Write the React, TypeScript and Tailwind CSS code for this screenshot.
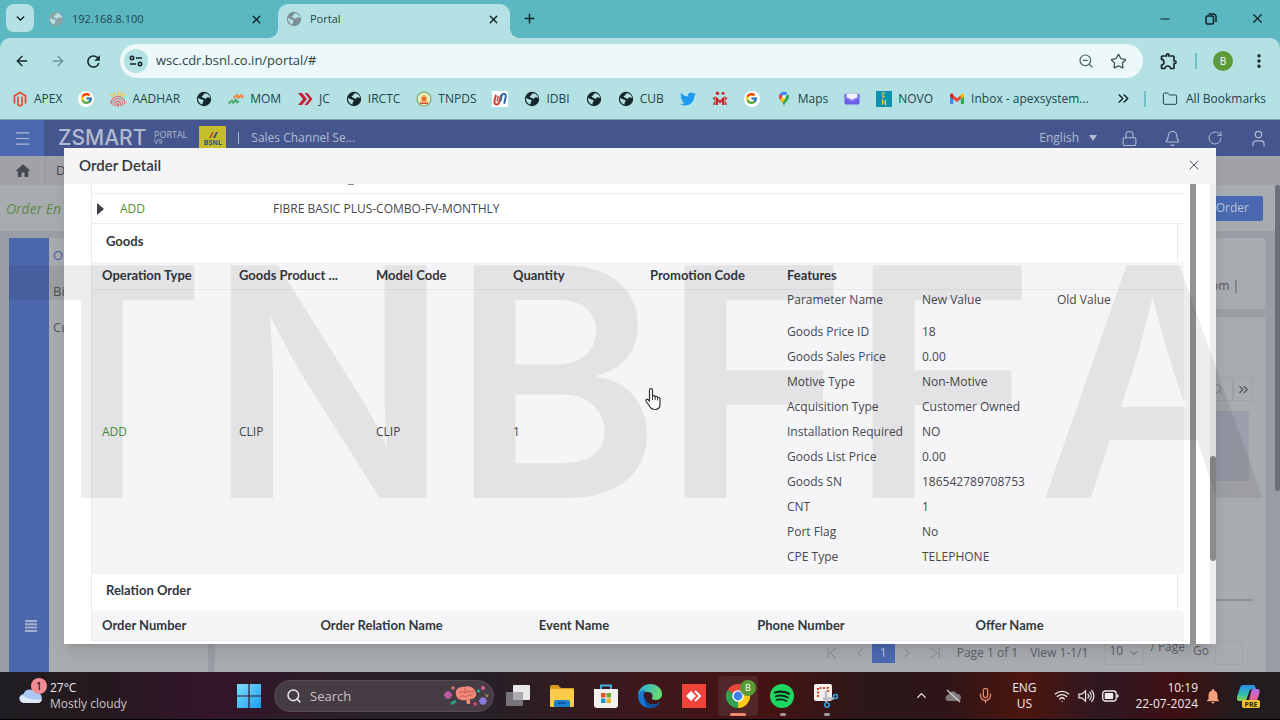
import { useState } from 'react';
import type { ReactNode } from 'react';
import {
  ArrowLeft, ArrowRight, Bell, ChevronDown, ChevronLeft, ChevronRight, ChevronUp, ChevronsRight, Folder, Lock,
  Menu, Mic, Minus, MoreVertical, Plus, RotateCw, Search, Star, User, Wifi, X, ZoomOut,
} from 'lucide-react';
import { FaTwitter } from 'react-icons/fa';
import { FcGoogle } from 'react-icons/fc';
import { MdHome, MdNotifications, MdOutlineExtension, MdRefresh } from 'react-icons/md';

const FEATURES = [
  ['Goods Price ID', '18'],
  ['Goods Sales Price', '0.00'],
  ['Motive Type', 'Non-Motive'],
  ['Acquisition Type', 'Customer Owned'],
  ['Installation Required', 'NO'],
  ['Goods List Price', '0.00'],
  ['Goods SN', '186542789708753'],
  ['CNT', '1'],
  ['Port Flag', 'No'],
  ['CPE Type', 'TELEPHONE'],
];

const GOODS_COLUMNS = ['Operation Type', 'Goods Product ...', 'Model Code', 'Quantity', 'Promotion Code'];
const RELATION_COLUMNS = ['Order Number', 'Order Relation Name', 'Event Name', 'Phone Number', 'Offer Name'];

function Globe({ className = 'text-[#17262b]' }: { className?: string }) {
  return (
    <svg viewBox="0 0 16 16" className={`size-4 shrink-0 ${className}`}>
      <circle cx="8" cy="8" r="7.2" fill="currentColor" />
      <path d="M9 2.200C7.500 2.800 7.800 4.200 6.500 4.800 5.200 5.400 5.600 6.500 6.800 6.500 8.300 6.500 8 7.800 9.300 7.800s1-1.400 2.400-1.500 2 .6 2.600 1.200C14.200 4.800 12 2.300 9 2.200z" fill="#b4e2e4" />
      <path d="M1.900 7.300c1.900-.1 3 1.400 4.600 1.500 1.300.1 1.600 1 .6 1.900-.9.800.1 1.600-.8 2.900C3.700 12.900 1.900 10.500 1.900 7.300z" fill="#b4e2e4" />
    </svg>
  );
}

function GoogleBadge() {
  return <span className="flex size-4 shrink-0 items-center justify-center rounded-full bg-white"><FcGoogle size={13} /></span>;
}

function ApexIcon() {
  return (
    <svg viewBox="0 0 16 16" className="size-4 shrink-0" fill="#e5533c">
      <path d="M8 .5 14.500 4.200v7.700l-1.900 1.100V5.300L8 2.700 3.400 5.300V13l-1.900-1.100V4.200z" />
      <path d="M5 6.100 6.800 5v8.200l1.200.7 1.200-.7V5L11 6.100v8.100l-3 1.700-3-1.700z" />
    </svg>
  );
}

function AadhaarIcon() {
  return (
    <svg viewBox="0 0 16 16" className="size-4 shrink-0" fill="none">
      <path d="M8 .5v4M3.500 1.500l2 3M12.500 1.500l-2 3M.5 3.500l3 2M15.500 3.500l-3 2" stroke="#f4c64a" strokeWidth="1.600" />
      <path d="M1 13C1 3 15 3 15 13M3 14.500c-.4-9 10-9 10 0M5.200 15.200c-.3-6.500 5.600-6.500 5.600 0M7.200 15.500c-.2-3.500 1.700-3.500 1.600 0" stroke="#e8625f" strokeWidth="1.100" />
    </svg>
  );
}

function MomIcon() {
  return (
    <svg viewBox="0 0 16 16" className="size-4 shrink-0" fill="none" strokeWidth="2" strokeLinejoin="round">
      <path d="M.5 12.500 4 9.500 5 12l3-3.500L9 11.500l2-1.500" stroke="#4caf6e" />
      <path d="M5.500 7 9 4l1 3 3-3 1 2.500 1.500-2" stroke="#ee8a45" />
    </svg>
  );
}

function JcIcon() {
  return (
    <svg viewBox="0 0 16 16" className="size-4 shrink-0" fill="#c8203a">
      <path d="M1 2h4l5 6-5 6H1l5-6z" />
      <path d="M7.500 2h3l5 6-5 6h-3l4.800-6z" />
    </svg>
  );
}

function TnpdsIcon() {
  return (
    <svg viewBox="0 0 16 16" className="size-4 shrink-0">
      <circle cx="8" cy="8" r="7" fill="#e6efc4" stroke="#7ba35d" strokeWidth="1.200" />
      <path d="M5 11V6.500C5 3 11 3 11 6.500V11z" fill="#f1b44c" />
      <circle cx="8" cy="8" r="2" fill="#e2613e" />
      <path d="M4 11.500h8v1.500H4z" fill="#d84a3c" />
    </svg>
  );
}

function UnionIcon() {
  return (
    <svg viewBox="0 0 16 16" className="size-4 shrink-0" fill="none" strokeWidth="1.900" strokeLinecap="round">
      <path d="M0 0h16v16H0z" fill="#fff" />
      <path d="M3.800 4.500 2.500 10c-.8 4 3.500 5 4.800 1L9 4.500" stroke="#d8382f" />
      <path d="M6.200 5.500 5.200 10" stroke="#d8382f" strokeWidth="1.400" />
      <path d="M8.500 9.500 9.500 5c1-3.500 5-2.500 4.200 1L12.300 12" stroke="#2a62a8" />
    </svg>
  );
}

function FigureIcon() {
  return (
    <svg viewBox="0 0 16 16" className="size-4 shrink-0" fill="#c9252c">
      <circle cx="5.500" cy="2.300" r="1.700" />
      <circle cx="11" cy="2.300" r="1.500" />
      <path d="M3.500 14V5l4.500 4.500L12.500 5v9H10v-3.500L8 12.600l-2-2.100V14z" />
      <path d="m.5 7.500 2.300-2v4zM15.500 7.500l-2.300-2v4zM.8 13.500l2-4V14zM15.200 13.500l-2-4V14z" />
    </svg>
  );
}

function MapsIcon() {
  return (
    <svg viewBox="0 0 16 16" className="size-4 shrink-0">
      <path d="M8 .8a5 5 0 0 0-5 5c0 1.200.4 2.200 1 3L11.500 2.200A5 5 0 0 0 8 .8z" fill="#4285f4" />
      <path d="M3.200 4.500C2.800 6 3.200 7.600 4 8.800l2.700-3.200-2.500-2.700z" fill="#ea4335" />
      <path d="M4 8.800c1.500 2.200 3.200 3.200 4 6.400.8-3.200 2.500-4.200 4-6.400.9-1.300 1.400-3.500.4-5.500z" fill="#34a853" />
      <path d="M4 8.800 6.500 12l3.200-4.500-3.300-1.600z" fill="#fbbc04" />
      <circle cx="8" cy="5.800" r="1.700" fill="#fff" />
    </svg>
  );
}

function EnvelopeIcon() {
  return (
    <svg viewBox="0 0 16 16" className="size-4 shrink-0">
      <rect x=".5" y="2.500" width="15" height="11" rx="1.500" fill="#6a5be8" />
      <path d="M2.500 2.500h11v4L8 9 2.500 6.500z" fill="#f4f1ff" />
      <path d="m.5 5 7.500 4 7.500-4v2L8 11 .5 7z" fill="#8f7cf5" />
    </svg>
  );
}

function NovoIcon() {
  return (
    <svg viewBox="0 0 16 16" className="size-4 shrink-0">
      <path d="M0 0h16v16H0z" fill="#0d8fb0" />
      <path d="M5.500 2h4M7 2v5M9 5.500H7M6.500 14V9l3 4.500V8.500" stroke="#c9d04e" strokeWidth="1.200" fill="none" />
    </svg>
  );
}

function GmailIcon() {
  return (
    <svg viewBox="0 0 16 16" className="size-4 shrink-0">
      <path d="M1 4v9h3.200V7z" fill="#4285f4" />
      <path d="M15 4v9h-3.200V7z" fill="#34a853" />
      <path d="M11.800 4.500V8L15 5.500V4c0-1.500-1.600-2-2.600-1.200z" fill="#fbbc04" />
      <path d="M4.200 4.300 8 7.200l3.800-2.900V8L8 10.900 4.200 8z" fill="#ea4335" />
      <path d="M1 4c0-1.500 1.600-2 2.600-1.200l.6.500V8L1 5.500z" fill="#c5221f" />
    </svg>
  );
}

const BOOKMARKS: { icon: ReactNode; label?: string; title: string }[] = [
  { icon: <ApexIcon />, label: 'APEX', title: 'APEX' },
  { icon: <GoogleBadge />, title: 'Google' },
  { icon: <AadhaarIcon />, label: 'AADHAR', title: 'AADHAR' },
  { icon: <Globe />, title: 'Site' },
  { icon: <MomIcon />, label: 'MOM', title: 'MOM' },
  { icon: <JcIcon />, label: 'JC', title: 'JC' },
  { icon: <Globe />, label: 'IRCTC', title: 'IRCTC' },
  { icon: <TnpdsIcon />, label: 'TNPDS', title: 'TNPDS' },
  { icon: <UnionIcon />, title: 'Union Bank' },
  { icon: <Globe />, label: 'IDBI', title: 'IDBI' },
  { icon: <Globe />, title: 'Site' },
  { icon: <Globe />, label: 'CUB', title: 'CUB' },
  { icon: <FaTwitter size={16} className="shrink-0 text-[#1d9bf0]" />, title: 'Twitter' },
  { icon: <FigureIcon />, title: 'M' },
  { icon: <GoogleBadge />, title: 'Google' },
  { icon: <MapsIcon />, label: 'Maps', title: 'Maps' },
  { icon: <EnvelopeIcon />, title: 'Mail' },
  { icon: <NovoIcon />, label: 'NOVO', title: 'NOVO' },
  { icon: <GmailIcon />, label: 'Inbox - apexsystem...', title: 'Inbox' },
];

function TabStrip() {
  return (
    <div className="flex h-[38px] items-end bg-[#5bb7c0] pl-1.5 text-[11px] text-[#22454a]">
      <button aria-label="Search tabs" className="mb-1.5 flex size-7 items-center justify-center rounded-lg bg-[#b4e2e4] text-black">
        <ChevronDown size={13} strokeWidth={2.5} />
      </button>
      <div className="flex h-[38px] w-[244px] items-center pr-[15px] pl-3.5">
        <Globe className="text-[#8ea3a8]" />
        <span className="ml-2 flex-1">192.168.8.100</span>
        <button aria-label="Close tab" className="text-[#0f2326]"><X size={13} strokeWidth={2.5} /></button>
      </div>
      <div className="relative flex h-[34px] w-[232px] items-center rounded-t-[10px] bg-[#b4e2e4] pr-2.5 pb-1 pl-2">
        <span className="absolute bottom-0 -left-2.5 size-2.5 bg-[radial-gradient(circle_at_0_0,transparent_10px,#b4e2e4_10px)]" />
        <span className="absolute -right-2.5 bottom-0 size-2.5 bg-[radial-gradient(circle_at_100%_0,transparent_10px,#b4e2e4_10px)]" />
        <Globe className="text-[#7d8f96]" />
        <span className="ml-2 flex-1">Portal</span>
        <button aria-label="Close tab" className="text-[#0f2326]"><X size={13} strokeWidth={2.5} /></button>
      </div>
      <button aria-label="New tab" className="mb-3 ml-3 text-[#0f2326]"><Plus size={15} strokeWidth={2.2} /></button>
      <div className="mb-3 ml-auto flex items-center gap-8 pr-[15px] text-[#0f2326]">
        <button aria-label="Minimize"><Minus size={14} /></button>
        <button aria-label="Restore">
          <svg viewBox="0 0 14 14" className="size-3.5" fill="none" stroke="currentColor" strokeWidth="1.500">
            <rect x="2" y="4" width="7.500" height="8" rx="1.500" />
            <path d="M4.500 2h5A2.500 2.500 0 0 1 12 4.500V10" />
          </svg>
        </button>
        <button aria-label="Close window"><X size={15} strokeWidth={2} /></button>
      </div>
    </div>
  );
}

function Toolbar() {
  return (
    <div className="flex h-[46px] items-center rounded-t-[10px] bg-[#b4e2e4] pr-3 pl-3.5 text-[#17262b]">
      <button aria-label="Back"><ArrowLeft size={16} strokeWidth={2} /></button>
      <button aria-label="Forward" className="ml-5 text-[#6c9299]"><ArrowRight size={16} strokeWidth={2} /></button>
      <button aria-label="Reload" className="ml-[18px]"><MdRefresh size={19} /></button>
      <div className="ml-[17px] flex h-[34px] flex-1 items-center rounded-full bg-[#ecf8f9] pr-4 pl-1">
        <button aria-label="Site information" className="flex size-6 items-center justify-center rounded-full bg-[#b4e2e4]">
          <svg viewBox="0 0 14 14" className="size-3.5" fill="none" stroke="currentColor" strokeWidth="1.600">
            <circle cx="3" cy="4" r="1.700" />
            <path d="M7 4h6M1 10h6" />
            <circle cx="11" cy="10" r="1.700" />
          </svg>
        </button>
        <input aria-label="Address" defaultValue="wsc.cdr.bsnl.co.in/portal/#" className="ml-2 min-w-0 flex-1 bg-transparent text-[13px] text-[#2c4347] outline-none" />
        <button aria-label="Zoom"><ZoomOut size={16} strokeWidth={1.800} className="text-[#4b5f64]" /></button>
        <button aria-label="Bookmark this page" className="ml-4"><Star size={17} strokeWidth={1.800} className="text-[#3f5257]" /></button>
      </div>
      <button aria-label="Extensions" className="ml-4"><MdOutlineExtension size={20} /></button>
      <span className="ml-4 h-4 w-0.5 bg-[#6fc0c8]" />
      <button aria-label="Profile" className="ml-4 flex size-5 items-center justify-center rounded-full bg-[#5b9a35] text-[10px] text-white">B</button>
      <button aria-label="Menu" className="ml-[17px]"><MoreVertical size={18} strokeWidth={2.500} /></button>
    </div>
  );
}

function BookmarksBar() {
  return (
    <div className="flex h-9 items-center border-b border-[#7fa3b5] bg-[#b4e2e4] pr-3.5 pb-1.5 pl-3 text-[12px] text-[#24434a]">
      <div className="flex items-center gap-4">
        {BOOKMARKS.map((b, i) => (
          <a key={i} href="#" aria-label={b.title} className="flex items-center gap-1.5 whitespace-nowrap">
            {b.icon}
            {b.label}
          </a>
        ))}
      </div>
      <button aria-label="More bookmarks" className="mr-3 ml-auto text-[#17262b]"><ChevronsRight size={17} strokeWidth={2.200} /></button>
      <span className="mr-4 h-4 w-0.5 bg-[#6fc0c8]" />
      <a href="#" className="flex items-center gap-2 whitespace-nowrap"><Folder size={16} strokeWidth={1.500} />All Bookmarks</a>
    </div>
  );
}

function PortalHeader() {
  return (
    <div className="flex h-9 shrink-0 items-center bg-[#45568f] text-[#b3bad0]">
      <button aria-label="Menu" className="flex h-9 w-11 items-center justify-center bg-[#4a69b0]"><Menu size={19} strokeWidth={1.500} /></button>
      <span className="ml-3.5 w-24 font-[Inter,sans-serif] text-[21px] font-medium">ZSMART</span>
      <span className="flex flex-col text-[9px] leading-[7px]"><span>PORTAL</span><span className="text-[7px]">V9</span></span>
      <span className="ml-3 flex h-6 w-[27px] flex-col items-center justify-end bg-[#c5bd2c] pb-1 text-[7px] leading-[7px] font-bold text-[#34507c]">
        <svg viewBox="0 0 10 8" className="h-2 w-2.5">
          <path d="M1 7 4 1h2L3 7z" fill="#b4532f" />
          <path d="M5 7 8 1h2L7 7z" fill="#34507c" />
        </svg>
        BSNL
      </span>
      <span className="ml-3 h-3 w-px bg-[#b3bad0]" />
      <span className="ml-3 text-[12px]">Sales Channel Se...</span>
      <div className="ml-auto flex items-center pr-3">
        <button className="flex items-center gap-2.5 text-[12px]">
          English
          <svg viewBox="0 0 8 6" className="h-1.5 w-2" fill="currentColor"><path d="M0 0h8L4 6z" /></svg>
        </button>
        <button aria-label="Lock" className="ml-6"><Lock size={17} strokeWidth={1.500} /></button>
        <button aria-label="Notifications" className="ml-[26px]"><Bell size={17} strokeWidth={1.500} /></button>
        <button aria-label="Refresh" className="ml-[26px]"><RotateCw size={16} strokeWidth={1.500} /></button>
        <button aria-label="Account" className="ml-[26px]"><User size={19} strokeWidth={1.500} /></button>
      </div>
    </div>
  );
}

function Pagination() {
  return (
    <div className="mt-auto flex h-9 items-center justify-end pr-[22px] pb-0.5 text-[12px] text-[#5b5f69]">
      <button aria-label="First page" className="text-[#848890]"><svg viewBox="0 0 12 12" className="size-3" fill="none" stroke="currentColor"><path d="M2 1v10M10 1 4 6l6 5" /></svg></button>
      <button aria-label="Previous page" className="ml-3.5 text-[#848890]"><ChevronLeft size={16} strokeWidth={1.500} /></button>
      <button className="ml-1 flex h-5 w-[23px] items-center justify-center bg-[#4a69b0] text-[#b9c2d8]">1</button>
      <button aria-label="Next page" className="ml-1 text-[#848890]"><ChevronRight size={16} strokeWidth={1.500} /></button>
      <button aria-label="Last page" className="ml-3.5 text-[#848890]"><svg viewBox="0 0 12 12" className="size-3" fill="none" stroke="currentColor"><path d="M10 1v10M2 1l6 5-6 5" /></svg></button>
      <span className="ml-4">Page 1 of 1</span>
      <span className="ml-3">View 1-1/1</span>
      <span className="relative ml-4 flex items-center">
        <select aria-label="Rows per page" className="h-6 w-10 appearance-none border border-[#a0a4aa] bg-transparent pb-1 pl-1">
          <option>10</option>
        </select>
        <ChevronDown size={12} className="absolute right-1" />
      </span>
      <span className="ml-1.5 pb-3">/ Page</span>
      <label htmlFor="go-page" className="ml-2 pb-1">Go</label>
      <input id="go-page" className="ml-1.5 h-6 w-7 border border-[#a0a4aa] bg-transparent" />
    </div>
  );
}

function PortalPage() {
  return (
    <div className="flex flex-1 flex-col bg-[#9a9da3]">
      <PortalHeader />
      <div className="flex h-[29px] items-center bg-[#a0a2a8] text-[13px] text-[#45484f]">
        <a href="#" aria-label="Home" className="flex h-full w-[46px] items-center justify-center border-r border-[#94979d]"><MdHome size={18} /></a>
        <span className="ml-2.5">D</span>
      </div>
      <div className="flex flex-1">
        <div className="flex min-w-0 flex-1 flex-col">
          <div className="flex h-[46px] items-center justify-between bg-[#a8abaf] pr-3 pl-1.5">
            <span className="text-[14px] font-medium text-[#5d8a45] italic">Order En</span>
            <button className="h-[25px] rounded-xs bg-[#4a69b0] pr-3.5 pl-5 text-[12px] text-[#b9c2d8]">Order</button>
          </div>
          <div className="flex flex-1 pt-[7px] pl-[9px]">
            <div className="flex w-10 flex-col items-center justify-end bg-[#4c67ab] pb-10 pl-1 text-[#a5b0cd]">
              <svg viewBox="0 0 12 12" className="size-3" fill="currentColor"><path d="M0 0h12v2H0zM0 3.300h12v2H0zM0 6.600h12v2H0zM0 10h12v2H0z" /></svg>
            </div>
            <nav className="flex w-[159px] flex-col gap-5 bg-[#a8abaf] pt-[9px] pl-1 text-[13px] leading-4 text-[#50545c]">
              <a href="#" className="text-[#4a5fa8]">Or</a>
              <a href="#">Bi</a>
              <a href="#">Cu</a>
            </nav>
            <div className="ml-[7px] flex flex-1 flex-col pr-2.5">
              <div className="flex h-[71px] items-end justify-end rounded-xs bg-[#a8abaf] pr-[26px] pb-3.5 text-[12px] text-[#50545c]">om |</div>
              <div className="mt-2 flex flex-1 flex-col bg-[#a8abaf]">
                <div className="mt-15 flex justify-end pr-3 text-[#50545c]">
                  <button aria-label="Search" className="flex h-6 w-8 items-center justify-center border border-[#9ea1a7]"><Search size={12} className="text-[#81858c]" /></button>
                  <button aria-label="More" className="flex h-6 w-5 items-center justify-center border border-[#9ea1a7]"><ChevronsRight size={15} /></button>
                </div>
                <div className="mt-2.5 mr-4 h-[70px] bg-[#9b9fab]" />
                <div className="mt-[118px] mr-3 h-0.5 bg-[#8e9197]" />
                <Pagination />
              </div>
            </div>
          </div>
        </div>
        <div className="w-[5px] bg-[#9a9da3]"><div className="h-[306px] rounded-full bg-[#6d7078]" /></div>
      </div>
    </div>
  );
}

const HEADING = "font-[Lato,sans-serif] text-[13px] font-bold text-[#33373d]";

function GoodsTable() {
  return (
    <table className="w-full table-fixed bg-[#f5f5f7] text-left">
      <thead>
        <tr className={`h-[27px] border-b border-[#e9e9eb] ${HEADING}`}>
          {GOODS_COLUMNS.map(c => <th key={c} className="w-[137px] pl-2.5">{c}</th>)}
          <th className="pl-2.5">Features</th>
        </tr>
      </thead>
      <tbody>
        <tr>
          <td className="pl-2.5 text-[#4d9137]">ADD</td>
          <td className="pl-2.5">CLIP</td>
          <td className="pl-2.5">CLIP</td>
          <td className="pl-2.5">1</td>
          <td />
          <td className="pb-1 pl-2.5">
            <table className="w-full table-fixed text-left">
              <thead>
                <tr className="h-[30px] align-top leading-5">
                  <th className="w-[135px] font-normal">Parameter Name</th>
                  <th className="w-[135px] font-normal">New Value</th>
                  <th className="font-normal">Old Value</th>
                </tr>
              </thead>
              <tbody>
                {FEATURES.map(([name, value]) => (
                  <tr key={name} className="h-[25px]">
                    <td>{name}</td>
                    <td>{value}</td>
                    <td />
                  </tr>
                ))}
              </tbody>
            </table>
          </td>
        </tr>
      </tbody>
    </table>
  );
}

function OrderDetail({ onClose }: { onClose: () => void }) {
  return (
    <div role="dialog" aria-label="Order Detail" className="absolute inset-x-16 inset-y-7 flex flex-col overflow-hidden bg-white text-[12px] leading-4 text-[#45484e] shadow-lg">
      <div className="flex h-9 shrink-0 items-center justify-between bg-[#f5f5f7] pr-3.5 pb-0.5 pl-[15px]">
        <h2 className="font-[Lato,sans-serif] text-[15px] font-semibold text-[#33373d]">Order Detail</h2>
        <button aria-label="Close" onClick={onClose} className="text-[#55585e]"><X size={16} strokeWidth={1.500} /></button>
      </div>
      <div className="flex min-h-0 flex-1">
        <div className="min-w-0 flex-1 overflow-hidden pr-1.5 pl-[27px]">
          <div className="border-l border-[#e9e9eb]">
            <div className="h-[9px] pl-64"><div className="h-px w-1.5 bg-[#85888d]" /></div>
            <div className="flex h-[31px] items-center border-y border-[#ececee] pl-[5px]">
              <button aria-label="Expand" className="w-[23px]">
                <svg viewBox="0 0 7 12" className="h-3 w-[7px]" fill="#3f4247"><path d="M0 0v12l7-6z" /></svg>
              </button>
              <span className="w-[153px] text-[#4d9137]">ADD</span>
              <span>FIBRE BASIC PLUS-COMBO-FV-MONTHLY</span>
            </div>
            <div className={`mr-1.5 flex h-[38px] items-center border-r border-[#e9e9eb] pb-1 pl-3.5 ${HEADING}`}>Goods</div>
            <GoodsTable />
            <div className={`mr-1.5 flex h-[37px] items-center border-r border-[#e9e9eb] pb-1 pl-3.5 ${HEADING}`}>Relation Order</div>
            <table className="w-full table-fixed bg-[#f5f5f7] text-left">
              <thead>
                <tr className={`h-[30px] border-b border-[#ececee] ${HEADING}`}>
                  {RELATION_COLUMNS.map(c => <th key={c} className="w-1/5 pl-2.5">{c}</th>)}
                </tr>
              </thead>
            </table>
          </div>
        </div>
        <div className="w-1.5 bg-[#929292]" />
        <div className="ml-3.5 w-1.5 bg-[#eeeeef] pt-[272px]"><div className="h-[105px] rounded-full bg-[#8b8b8b]" /></div>
      </div>
    </div>
  );
}

function TaskIcons() {
  return (
    <div className="ml-3 flex items-center gap-5">
      <button aria-label="Task view"><svg viewBox="0 0 24 24" className="size-6"><rect x="7" y="1" width="17" height="15" rx="1" fill="#e9e7e9" /><rect x="0" y="8" width="17" height="14" rx="1" fill="#77747a" /><path d="M7 8h10v8H7z" fill="#adabb0" /></svg></button>
      <button aria-label="File Explorer"><svg viewBox="0 0 24 24" className="size-6"><path d="M0 3a2 2 0 0 1 2-2h6l3 3h13v5H0z" fill="#d99a1c" /><rect y="5" width="24" height="18" rx="1.500" fill="#fbcb4a" /><path d="M4 23v-5a2 2 0 0 1 2-2h12a2 2 0 0 1 2 2v5z" fill="#1c7fd0" /><path d="M8 19h8" stroke="#0c4f91" strokeWidth="1.500" /></svg></button>
      <button aria-label="Microsoft Store"><svg viewBox="0 0 24 24" className="size-6"><path d="M7 6V1.500h10V6" fill="none" stroke="#43b4e8" strokeWidth="1.800" /><path d="M0 5h24v16a3 3 0 0 1-3 3H3a3 3 0 0 1-3-3z" fill="#f2f0ef" /><path d="M7 9h4.500v4.500H7z" fill="#e5502a" /><path d="M12.500 9H17v4.500h-4.500z" fill="#6ba62d" /><path d="M7 14.500h4.500V19H7z" fill="#1d94d4" /><path d="M12.500 14.500H17V19h-4.500z" fill="#f0b323" /></svg></button>
      <button aria-label="Edge">
        <svg viewBox="0 0 24 24" className="size-6">
          <defs><linearGradient id="edge" x1="0" y1="0" x2="1" y2=".3"><stop stopColor="#2aa7e8" /><stop offset="1" stopColor="#64dc70" /></linearGradient></defs>
          <path d="M0 12C0 5 5.500 0 12 0c7 0 12 4.500 12 10 0 4-3 6-6.500 6-3 0-4-1.300-3.500-2.300 1.500-2.200 0-5.700-4-5.700C5 8 0 10 0 12z" fill="url(#edge)" />
          <path d="M0 12c.5-4 4-6 8-5.500C6 8 5 10.500 6 14c1.200 4 5 7 9.500 6.500 3 0 5-1.500 6.500-2.500-2 4-6 6-10 6C5 24 0 18.500 0 12z" fill="#1878cf" />
          <path d="M8 12.500c-1 4 2 8.500 7.500 8 3 0 5-1.500 6.500-2.500-2 4-6 6-10 6-4-1.500-8-6-4-11.500z" fill="#0e4f9e" />
        </svg>
      </button>
      <button aria-label="AnyDesk"><svg viewBox="0 0 24 24" className="size-6"><path d="M0 0h24v24H0z" fill="#f0443a" /><path d="m4 12 5-5 5 5-5 5z" fill="#fff" /><path d="m13 7 5 5-5 5" fill="none" stroke="#fff" strokeWidth="2" /></svg></button>
      <button aria-label="Chrome" className="relative -mx-2 flex h-10 w-10 items-center justify-center rounded bg-white/8">
        <svg viewBox="0 0 24 24" className="size-6"><path d="M12 12 1.600 6A12 12 0 0 1 22.400 6z" fill="#e8453c" /><path d="M12 12 1.600 6A12 12 0 0 0 12 24z" fill="#34a04f" /><path d="M12 12V24A12 12 0 0 0 22.400 6z" fill="#fbc917" /><circle cx="12" cy="12" r="5.800" fill="#fff" /><circle cx="12" cy="12" r="4.400" fill="#3f7ee8" /></svg>
        <span className="absolute top-1 right-0.5 flex size-4 items-center justify-center rounded-full bg-[#5b9a35] text-[9px] text-white">B</span>
        <span className="absolute bottom-0 h-[3px] w-4 rounded-full bg-[#f08a6c]" />
      </button>
      <button aria-label="Spotify" className="relative flex h-10 items-center">
        <svg viewBox="0 0 24 24" className="size-6" fill="none" strokeLinecap="round"><circle cx="12" cy="12" r="12" fill="#1ed760" /><path d="M5 8.500c5-1.500 10-1 14 1.300" stroke="#16231b" strokeWidth="2.200" /><path d="M5.800 12.300c4-1.200 8.500-.8 12 1.200" stroke="#16231b" strokeWidth="1.900" /><path d="M6.500 16c3.500-1 7-.7 10 1" stroke="#16231b" strokeWidth="1.600" /></svg>
        <span className="absolute bottom-0 left-2.5 h-[3px] w-1.5 rounded-full bg-[#a39a9a]" />
      </button>
      <button aria-label="Snipping Tool" className="relative flex h-10 items-center">
        <svg viewBox="0 0 24 24" className="size-6" fill="none"><rect width="18" height="17" rx="2" fill="#f4f1ef" /><path d="M4 13V4h10v5" stroke="#d9482b" strokeWidth="2.200" strokeDasharray="2 1.500" /><path d="M12 7v11M9 14.500h11" stroke="#b9bcc2" strokeWidth="2.500" /><circle cx="13" cy="21" r="2.200" stroke="#3b9fe0" strokeWidth="1.600" /><circle cx="21.500" cy="12.500" r="2" stroke="#3b9fe0" strokeWidth="1.600" /></svg>
        <span className="absolute bottom-0 left-2.5 h-[3px] w-1.5 rounded-full bg-[#a39a9a]" />
      </button>
    </div>
  );
}

function Taskbar() {
  return (
    <div className="flex h-12 items-center border-b border-black bg-[linear-gradient(90deg,#201e22_0%,#25191f_8%,#33152a_16%,#2a2028_28%,#262026_38%,#40161a_52%,#441413_60%,#2b1719_68%,#2f1518_74%,#4c160e_80%,#2e1822_86%,#3f0f12_92%,#211c1e_97%)] pr-[19px] pl-[19px] text-[12px] leading-4 text-[#eeeaec]">
      <div className="relative mr-[7px]">
        <svg viewBox="0 0 24 16" className="h-4 w-6"><path d="M5 15a4.500 4.500 0 0 1-.5-9A6.500 6.500 0 0 1 16.500 5 5 5 0 0 1 19 15z" fill="#a9c7f2" /><path d="M5 15a4.500 4.500 0 0 1-2-8c4 3 9 5 20 4.500-.8 2-2 3.500-4 3.500z" fill="#dfe9f8" /></svg>
        <span className="absolute -top-2.5 left-3 flex size-4 items-center justify-center rounded-full bg-[#f28b96] text-[11px] text-black">1</span>
      </div>
      <div className="w-[187px]"><div>27°C</div><div className="text-[#c9c4c8]">Mostly cloudy</div></div>
      <button aria-label="Start">
        <svg viewBox="0 0 24 24" className="size-6">
          <defs><linearGradient id="win" x1="0" y1="0" x2="1" y2="1"><stop stopColor="#7fdcfb" /><stop offset="1" stopColor="#1a9df0" /></linearGradient></defs>
          <path d="M0 0h11.400v11.400H0zM12.600 0H24v11.400H12.600zM0 12.600h11.400V24H0zM12.600 12.600H24V24H12.600z" fill="url(#win)" />
        </svg>
      </button>
      <div className="ml-[13px] flex h-8 w-[220px] items-center rounded-full border border-[#5a4d55] bg-[#463c43] pr-1 pl-[11px]">
        <Search size={16} strokeWidth={2.200} className="shrink-0" />
        <input aria-label="Search" placeholder="Search" className="ml-2 min-w-0 flex-1 bg-transparent text-[13px] outline-none placeholder:text-[#c9c0c6]" />
        <svg viewBox="0 0 46 22" className="h-[22px] w-[46px] shrink-0" fill="none">
          <path d="M13 9c-1-5 4-8 8-7 5-2 11 1 12 6 1 4-2 6-6 6v5h-3l-1-4c-5 1-10-1-10-6z" fill="#f0897a" />
          <path d="M16 8c3-3 5 1 8-1s4 1 7-1M17 12c3-3 5 1 7-1s4 0 6-2M22 3v4" stroke="#c75c55" />
          <path d="M1 10h8M5 6v8M2.200 7.200l5.600 5.600M7.800 7.200l-5.600 5.600" stroke="#c45ba6" strokeWidth="1.800" />
          <path d="M36 16h8M40 12v8M37.200 13.200l5.600 5.600M42.800 13.200l-5.600 5.600" stroke="#8f7be0" strokeWidth="1.800" />
          <path d="m8 19 5-3M34 5l3 2" stroke="#2a9b87" strokeWidth="3" />
          <circle cx="10" cy="3" r="1.800" fill="#d97863" /><circle cx="40" cy="3" r="2" fill="#e0609a" />
          <circle cx="32" cy="19" r="1.800" fill="#d84d7c" /><path d="m42 9 2 3 1-3" stroke="#c98f42" />
        </svg>
      </div>
      <TaskIcons />
      <div className="ml-auto flex items-center">
        <button aria-label="Hidden icons"><ChevronUp size={15} strokeWidth={2.200} /></button>
        <svg viewBox="0 0 16 14" className="ml-4 h-3.5 w-4"><path d="M3.500 12a3 3 0 0 1 0-6A4.500 4.500 0 0 1 12 5a3.500 3.500 0 0 1 .8 7z" fill="#827b7d" /><path d="m2 1 13 12" stroke="#d6d0d2" strokeWidth="1.200" /></svg>
        <Mic size={17} strokeWidth={1.800} className="ml-4 text-[#e48a66]" />
        <div className="ml-4 w-7 text-center">ENG US</div>
        <Wifi size={16} className="ml-4" />
        <svg viewBox="0 0 18 16" className="ml-2 h-4 w-[17px]" fill="none" stroke="currentColor" strokeWidth="1.300" strokeLinecap="round"><path d="M1 6v4h3l4 3.500v-11L4 6zM10.500 6a3 3 0 0 1 0 4M12.500 4a6 6 0 0 1 0 8M14.500 2a9 9 0 0 1 0 12" /></svg>
        <svg viewBox="0 0 17 12" className="ml-[7px] h-3 w-[17px]"><rect x=".7" y="1" width="13.500" height="10" rx="2.500" fill="none" stroke="currentColor" strokeWidth="1.300" /><rect x="2.700" y="3" width="8.500" height="6" rx=".8" fill="currentColor" /><path d="M15 4.500h1.500v3H15z" fill="currentColor" /></svg>
        <div className="ml-4 text-right"><div>10:19</div><div>22-07-2024</div></div>
        <MdNotifications size={18} className="ml-1.5 text-[#f4a07c]" />
        <svg viewBox="0 0 24 24" className="ml-[15px] size-6">
          <defs>
            <linearGradient id="cpA" x1="0" y1="0" x2="0" y2="1"><stop stopColor="#2b8de8" /><stop offset=".6" stopColor="#2fc0b0" /><stop offset="1" stopColor="#9bd13f" /></linearGradient>
            <linearGradient id="cpB" x1="0" y1="0" x2="0" y2="1"><stop stopColor="#b06cf0" /><stop offset="1" stopColor="#f0627c" /></linearGradient>
          </defs>
          <path d="M6 1h10c2 0 2 1.500 3 4h-4c-1.500 0-2.500 1-3 3l-2 6c-.6 2-1.500 3-4 3H2c-2 0-2.500-2-2-4L3 4c.5-2 1-3 3-3z" fill="url(#cpA)" />
          <path d="M16 5h4c2.500 0 3 2 2.500 4L21 14c-.7 2-1.500 3-4 3h-7c2 0 2-1 2.500-3L14 8c.4-2 1-3 2-3z" fill="url(#cpB)" />
          <rect x="5" y="16" width="18" height="8" rx="2" fill="#f5c431" />
          <text x="14" y="22.500" textAnchor="middle" fontSize="7" fontWeight="700" fill="#2b2410">PRE</text>
        </svg>
      </div>
    </div>
  );
}

export default function App() {
  const [open, setOpen] = useState(true);

  return (
    <div className="relative flex min-h-screen flex-col overflow-hidden font-['Open_Sans','Noto_Sans',sans-serif]">
      <div className="bg-[#5bb7c0]">
        <TabStrip />
        <Toolbar />
        <BookmarksBar />
      </div>
      <main className="relative flex flex-1 flex-col">
        <PortalPage />
        {open && <OrderDetail onClose={() => setOpen(false)} />}
      </main>
      <Taskbar />

      {/* Watermark */}
      <div className="pointer-events-none absolute top-[222px] -left-1 font-[Inter,sans-serif] text-[320px] leading-none font-semibold whitespace-nowrap text-black/7 select-none [font-kerning:none]">TNBFFA</div>

      {/* Hand pointer */}
      <svg viewBox="0 0 18 24" className="pointer-events-none absolute top-[387px] left-[644px] h-6 w-[18px]">
        <path d="M5.500 14V3.200C5.500 1 8.500 1 8.500 3.200V9c1-.8 2.500-.3 2.600.7 1-.6 2.300-.1 2.500.9 1-.4 2.400.1 2.400 1.600V17c0 3.500-2 5.500-5 5.500-2.800 0-4.300-1-5.500-3.500L2.200 14.500C1 12.500 3.300 11.500 4.300 13z" fill="#fff" stroke="#333" strokeWidth="1.200" />
        <path d="M8.500 9v4M11.100 10v3M13.600 11v2.500" stroke="#333" />
      </svg>
    </div>
  );
}
